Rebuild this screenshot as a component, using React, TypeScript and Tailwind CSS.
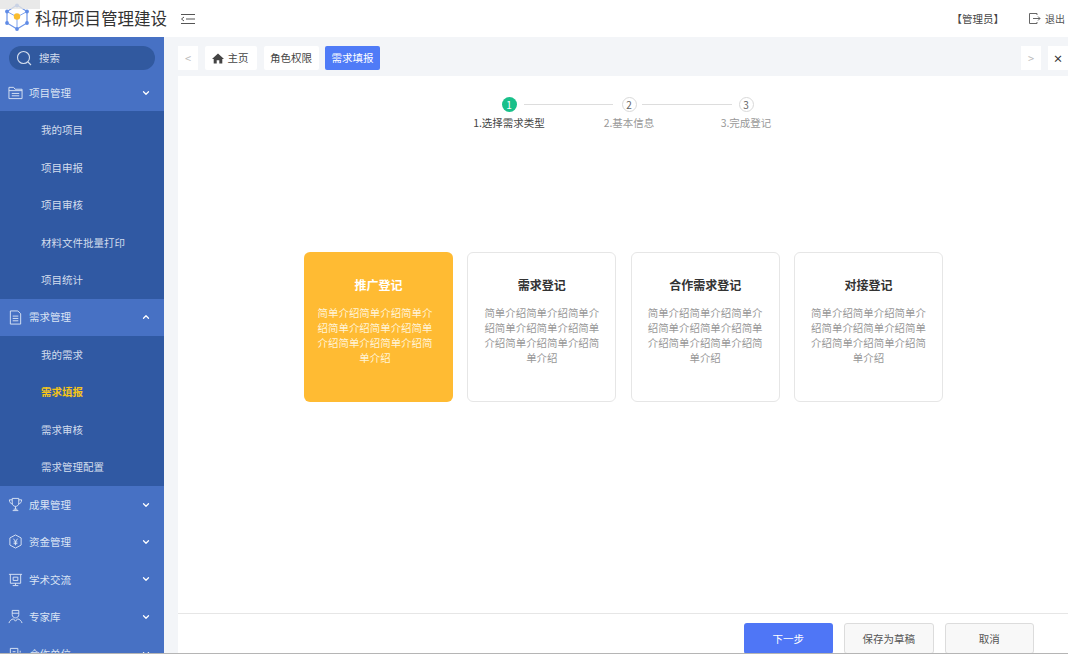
import React from 'react';
import { ChevronDown, ChevronUp } from 'lucide-react';

const FONT = '"Noto Sans CJK SC", "Noto Sans", sans-serif';

const Logo = () => (
  <svg className="mb-[4px]" width="26" height="28" viewBox="0 0 26 28" fill="none">
    <path d="M13 2 L23 8.5 V20 L13 26 L3 20 V8.5 Z" stroke="#6d95e8" strokeWidth="1.2" />
    <path d="M3 8.5 L13 14 L23 8.5 M13 14 V26" stroke="#7fa3ec" strokeWidth="1" />
    <circle cx="13" cy="13.5" r="3.2" fill="#f9bd2e" />
    <circle cx="13" cy="2.5" r="1.9" fill="#5f8be6" />
    <circle cx="3" cy="8.5" r="1.9" fill="#5f8be6" />
    <circle cx="23" cy="8.5" r="1.9" fill="#5f8be6" />
    <circle cx="3" cy="20" r="1.9" fill="#5f8be6" />
    <circle cx="23" cy="20" r="1.9" fill="#5f8be6" />
    <circle cx="13" cy="26" r="1.9" fill="#5f8be6" />
  </svg>
);

const iconProps = {
  width: 15,
  height: 15,
  viewBox: '0 0 16 16',
  fill: 'none',
  stroke: 'currentColor',
  strokeWidth: 1,
};

const FolderIcon = () => (
  <svg {...iconProps}>
    <path d="M1 14.5V2.5H6L7.5 4.5H15V14.5Z" />
    <path d="M1 6H15M4 9H12M4 11.5H12" />
  </svg>
);
const DocIcon = () => (
  <svg {...iconProps}>
    <path d="M2.5 1H10.5L13.5 4V15H2.5Z" />
    <path d="M5 6.5H11M5 9H11M5 11.5H11" />
  </svg>
);
const TrophyIcon = () => (
  <svg {...iconProps}>
    <path d="M4.5 1.5H11.5V6.5C11.5 8.5 10 10 8 10C6 10 4.5 8.5 4.5 6.5Z" />
    <path d="M4.5 3H1.5C1.5 5.5 2.5 7 5 7.5M11.5 3H14.5C14.5 5.5 13.5 7 11 7.5M8 10V13M5 14.5H11M6 13H10" />
  </svg>
);
const YenIcon = () => (
  <svg {...iconProps}>
    <path d="M8 1L14 4.2V11.8L8 15L2 11.8V4.2Z" />
    <path d="M5.8 5L8 8L10.2 5M8 8V12M6 8.5H10M6 10.3H10" />
  </svg>
);
const BoardIcon = () => (
  <svg {...iconProps}>
    <path d="M1 2.5H15M2.5 2.5V12H13.5V2.5M5.5 5.5H10.5V9H5.5ZM8 12V14M5 14.5H11" />
  </svg>
);
const ExpertIcon = () => (
  <svg {...iconProps}>
    <path d="M4.5 1.5H11.5V6C11.5 8 10 9.5 8 9.5C6 9.5 4.5 8 4.5 6ZM4.5 4.5H11.5" />
    <path d="M1 15C1.8 12.5 3.5 11 5.8 10.5L8 13L10.2 10.5C12.5 11 14.2 12.5 15 15" />
  </svg>
);
const UnitIcon = () => (
  <svg {...iconProps}>
    <path d="M2.5 14.5V1.5H10.5V14.5ZM5 5H8M5 8H8M13 4V6" />
  </svg>
);

const SubItem = ({ label, active }: { label: string; active?: boolean }) => (
  <div className={`flex h-[37.45px] shrink-0 items-center bg-[#3059a3] pl-[41px] text-[10.5px] ${active ? 'font-bold text-[#f5c518]' : 'text-[#d3dded]'}`}>
    {label}
  </div>
);

const Group = ({ icon, label, open }: { icon: React.ReactNode; label: string; open?: boolean }) => (
  <div className="flex h-[37.45px] shrink-0 items-center pl-[8px] pr-[13px] text-[10.5px] text-[#dbe4f4]">
    <span className="flex w-[21px] shrink-0 items-center">{icon}</span>
    <span className="flex-1">{label}</span>
    {open ? <ChevronUp size={10} strokeWidth={3} className="text-white" /> : <ChevronDown size={10} strokeWidth={3} className="text-white" />}
  </div>
);

const Sidebar = () => (
  <aside className="flex w-[164px] shrink-0 flex-col overflow-hidden bg-[#4771c4]">
    <div className="shrink-0 px-[9px] pb-[4px] pt-[9px]">
      <div className="flex h-[24px] items-center gap-[6px] rounded-full bg-[#31599f] pl-[7px] text-[10.5px] text-[#d3dded]">
        <svg width="17" height="17" viewBox="0 0 17 17" fill="none" stroke="#d3dded" strokeWidth="1.1">
          <circle cx="7.5" cy="7.5" r="6" />
          <path d="M12 12L15 15" />
        </svg>
        搜索
      </div>
    </div>
    <Group icon={<FolderIcon />} label="项目管理" />
    <SubItem label="我的项目" />
    <SubItem label="项目申报" />
    <SubItem label="项目审核" />
    <SubItem label="材料文件批量打印" />
    <SubItem label="项目统计" />
    <Group icon={<DocIcon />} label="需求管理" open />
    <SubItem label="我的需求" />
    <SubItem label="需求填报" active />
    <SubItem label="需求审核" />
    <SubItem label="需求管理配置" />
    <Group icon={<TrophyIcon />} label="成果管理" />
    <Group icon={<YenIcon />} label="资金管理" />
    <Group icon={<BoardIcon />} label="学术交流" />
    <Group icon={<ExpertIcon />} label="专家库" />
    <Group icon={<UnitIcon />} label="合作单位" />
  </aside>
);

const Step = ({ n, label, active, width }: { n: number; label: string; active?: boolean; width: string }) => (
  <div className={`flex flex-col items-center ${width}`}>
    <div className={`flex h-[15px] w-[15px] shrink-0 items-center justify-center rounded-full text-[10px] ${active ? 'bg-[#19c08a] text-white' : 'border border-[#d9d9d9] bg-white text-[#666]'}`}>
      {n}
    </div>
    <div className={`mt-[3px] whitespace-nowrap text-[10.5px] leading-[15px] ${active ? 'text-[#444]' : 'text-[#999]'}`}>{label}</div>
  </div>
);

const intro = '简单介绍简单介绍简单介绍简单介绍简单介绍简单介绍简单介绍简单介绍简单介绍';

const Card = ({ title, active }: { title: string; active?: boolean }) => (
  <div className={`h-[150px] w-[149px] rounded-[6px] px-[13px] text-center ${active ? 'bg-[#ffbb33] pt-[24px] text-white' : 'border border-[#e6e6e6] bg-white pt-[23px]'}`}>
    <div className={`text-[12px] font-bold leading-[18px] ${active ? 'text-white' : 'text-[#333]'}`}>{title}</div>
    <div className={`mt-[11px] text-[10.45px] leading-[15px] ${active ? 'pr-[7px] text-[#fff3d6]' : 'text-[#999]'}`}>{intro}</div>
  </div>
);

const Tab = ({ children, active, className }: { children: React.ReactNode; active?: boolean; className?: string }) => (
  <div className={`flex h-[24px] items-center gap-[4px] rounded-[2px] px-[6.5px] text-[10.5px] ${active ? 'bg-[#4f7bf7] text-white' : 'bg-white text-[#444]'} ${className ?? ''}`}>
    {children}
  </div>
);

const FooterButton = ({ label, primary }: { label: string; primary?: boolean }) => (
  <div className={`flex h-[31px] w-[89.5px] shrink-0 items-center justify-center rounded-[3px] text-[10.5px] ${primary ? 'bg-[#4f76f6] text-white' : 'border border-[#dcdcdc] bg-[#f8f8f8] text-[#555]'}`}>
    {label}
  </div>
);

export default function App() {
  return (
    <div className="relative flex h-screen flex-col overflow-hidden bg-[#f3f5f8]" style={{ fontFamily: FONT }}>
      <div className="absolute left-0 top-0 h-[9px] w-[40px] bg-[#e4e4e4]/80" />
      <header className="flex h-[37px] shrink-0 items-center bg-white pl-[4px]">
        <Logo />
        <span className="ml-[5px] text-[16.5px] text-[#333]">科研项目管理建设</span>
        <svg className="ml-[13px]" width="16" height="12" viewBox="0 0 16 12" fill="none" stroke="#555" strokeWidth="1">
          <path d="M1 1.5H15M6 6H15M1 10.5H15M4 4L1.5 6L4 8" />
        </svg>
        <span className="ml-auto text-[10.5px] text-[#444]">【管理员】</span>
        <svg className="ml-[24px]" width="13" height="13" viewBox="0 0 13 13" fill="none" stroke="#666" strokeWidth="1">
          <path d="M9 3V1.5H1.5V11.5H9V10M5 6.5H12M10 4.5L12 6.5L10 8.5" />
        </svg>
        <span className="ml-[4px] mr-[3px] text-[10px] text-[#555]">退出</span>
      </header>

      <div className="flex min-h-0 flex-1">
        <Sidebar />
        <main className="flex min-w-0 flex-1 flex-col pl-[14px]">
          <div className="flex h-[39px] shrink-0 items-start pt-[9px]">
            <div className="flex h-[24px] w-[20px] items-center justify-center bg-white text-[11px] text-[#bbb]">&lt;</div>
            <div className="ml-[7px] flex items-center gap-[6.5px]">
              <Tab className="w-[52px]">
                <svg width="12" height="11" viewBox="0 0 12 11" fill="#444">
                  <path d="M6 0.5L0 6H1.7V10.5H4.7V7.2H7.3V10.5H10.3V6H12Z" />
                </svg>
                主页
              </Tab>
              <Tab>角色权限</Tab>
              <Tab active>需求填报</Tab>
            </div>
            <div className="ml-auto flex items-center gap-[7px]">
              <div className="flex h-[24px] w-[20px] items-center justify-center bg-white text-[11px] text-[#bbb]">&gt;</div>
              <div className="flex h-[24px] w-[20px] items-center justify-center bg-white text-[10px] font-bold text-[#333]">×</div>
            </div>
          </div>

          <div className="flex min-h-0 flex-1 flex-col bg-white">
            <div className="flex flex-1 flex-col items-center">
              <div className="mt-[21px] flex items-start pl-[10px]">
                <Step n={1} label="1.选择需求类型" active width="w-[28px] pr-[2px]" />
                <div className="mt-[7px] h-px w-[89px] bg-[#dddddd]" />
                <Step n={2} label="2.基本信息" width="w-[29px] pl-[3px]" />
                <div className="mt-[7px] h-px w-[90px] bg-[#dddddd]" />
                <Step n={3} label="3.完成登记" width="w-[28px]" />
              </div>
              <div className="ml-[1px] mt-[122px] flex gap-[14.33px]">
                <Card title="推广登记" active />
                <Card title="需求登记" />
                <Card title="合作需求登记" />
                <Card title="对接登记" />
              </div>
            </div>
            <div className="flex h-[40px] shrink-0 justify-end gap-[11px] overflow-hidden border-t border-[#e6e6e6] pr-[34px] pt-[9px]">
              <FooterButton label="下一步" primary />
              <FooterButton label="保存为草稿" />
              <FooterButton label="取消" />
            </div>
          </div>
        </main>
      </div>
      <div className="h-px shrink-0 bg-[#b5b5b5]" />
    </div>
  );
}
